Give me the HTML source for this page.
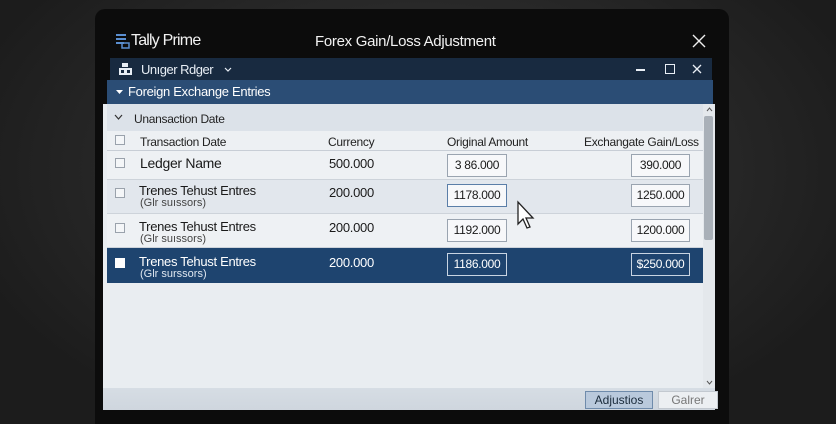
<!DOCTYPE html>
<html><head><meta charset="utf-8"><style>
*{margin:0;padding:0;box-sizing:border-box}
html,body{width:836px;height:424px;overflow:hidden}
body{background:radial-gradient(ellipse at 50% 40%,#3a3a3a,#1c1c1c 80%);font-family:"Liberation Sans",sans-serif;position:relative}
span{white-space:nowrap}
.bezel{position:absolute;left:95px;top:9px;width:634px;height:415px;background:#0c0c0c;border-radius:10px 10px 0 0}
.abs{position:absolute}
.title{left:110px;top:28px;width:602px;height:30px;color:#f2f2f2}
.sub{left:110px;top:58px;width:602px;height:22px;background:#182a40;color:#e8eef5;font-size:13px}
.hdr{left:107px;top:80px;width:606px;height:24px;background:#2b4d75;color:#fff;font-size:13px}
.content{left:103px;top:104px;width:612px;height:306px;background:#e9edf1}
.grp{left:107px;top:104px;width:596px;height:27px;background:#dce2e9;font-size:12px;color:#222}
.colh{left:107px;top:131px;width:596px;height:20px;background:#edf0f3;font-size:12px;color:#222;border-bottom:1px solid #c8ced6;letter-spacing:-0.3px}
.row{position:absolute;left:107px;width:596px;border-bottom:1px solid #cdd3da;color:#1a1a1a}
.cb{position:absolute;left:8px;width:10px;height:10px;border:1px solid #9aa2ac;background:#f4f6f8}
.t{position:absolute;font-size:13px;letter-spacing:-0.3px}
.s{position:absolute;font-size:11px;color:#444}
.box{position:absolute;height:23px;border:1px solid #9aa4b0;background:#f7f8fa;font-size:12px;text-align:center;line-height:21px;letter-spacing:-0.3px}
.sel{background:#1e446f;color:#fff}
.sel .box{background:#1e446f;border-color:#c8d4e2;color:#fff}
.sel .s{color:#dfe7f0}
.btn{position:absolute;top:391px;height:18px;font-size:12px;text-align:center;line-height:16px}
</style></head><body>
<div class="bezel"></div>
<div class="abs title">
 <svg class="abs" style="left:6px;top:5px" width="14" height="16"><rect x="0" y="1" width="10" height="2" fill="#5b8fd0"/><rect x="0" y="5" width="10" height="2" fill="#5b8fd0"/><rect x="0" y="9" width="8" height="2" fill="#5b8fd0"/><rect x="6" y="10" width="7" height="5" fill="none" stroke="#5b8fd0" stroke-width="1.5"/></svg>
 <span class="abs" style="left:21px;top:4px;font-size:16px;letter-spacing:-0.8px">Tally Prime</span>
 <span class="abs" style="left:205px;top:5px;font-size:15px;letter-spacing:-0.3px">Forex Gain/Loss Adjustment</span>
 <svg class="abs" style="left:582px;top:6px" width="14" height="14"><path d="M1 1L13 13M13 1L1 13" stroke="#eee" stroke-width="1.4"/></svg>
</div>
<div class="abs sub">
 <svg class="abs" style="left:9px;top:5px" width="13" height="12"><rect x="3" y="0" width="6" height="4" fill="#e8eef5"/><rect x="0" y="5" width="13" height="7" fill="#e8eef5"/><rect x="2" y="7" width="3" height="3" fill="#182a40"/><rect x="8" y="7" width="3" height="3" fill="#182a40"/></svg>
 <span class="abs" style="left:31px;top:4px;letter-spacing:-0.5px">Unıger Rdger</span>
 <svg class="abs" style="left:114px;top:9px" width="8" height="5"><path d="M1 1L4 4L7 1" stroke="#e8eef5" fill="none" stroke-width="1.2"/></svg>
 <div class="abs" style="left:526px;top:11px;width:9px;height:1.5px;background:#e8eef5"></div>
 <span class="abs" style="left:555px;top:6px;width:10px;height:10px;border:1.5px solid #e8eef5"></span>
 <svg class="abs" style="left:582px;top:6px" width="10" height="10"><path d="M1 1L9 9M9 1L1 9" stroke="#e8eef5" stroke-width="1.3"/></svg>
</div>
<div class="abs hdr"><svg class="abs" style="left:9px;top:10px" width="7" height="5"><path d="M0 0H7L3.5 4Z" fill="#fff"/></svg><span class="abs" style="left:21px;top:4px;letter-spacing:-0.3px">Foreign Exchange Entries</span></div>
<div class="abs content"></div>
<div class="abs grp"><svg class="abs" style="left:7px;top:10px" width="9" height="6"><path d="M1 1L4.5 5L8 1" stroke="#333" fill="none" stroke-width="1.2"/></svg><span class="abs" style="left:27px;top:8px;letter-spacing:-0.3px">Unansaction Date</span></div>
<div class="abs colh"><div class="cb" style="top:4px"></div>
 <span class="abs" style="left:33px;top:4px">Transaction Date</span>
 <span class="abs" style="left:221px;top:4px">Currency</span>
 <span class="abs" style="left:340px;top:4px">Original Amount</span>
 <span class="abs" style="left:477px;top:4px">Exchangate Gain/Loss</span>
</div>
<div class="row" style="top:151px;height:29px;background:#eef1f4"><div class="cb" style="top:7px"></div>
 <span class="t" style="left:33px;top:4px;font-size:14px">Ledger Name</span><span class="t" style="left:222px;top:5px">500.000</span>
 <div class="box" style="left:340px;top:3px;width:60px">3 86.000</div><div class="box" style="left:524px;top:3px;width:59px">390.000</div></div>
<div class="row" style="top:180px;height:34px;background:#e2e7ed"><div class="cb" style="top:8px"></div>
 <span class="t" style="left:32px;top:3px">Trenes Tehust Entres</span><span class="s" style="left:33px;top:17px">(Glr suıssors)</span><span class="t" style="left:222px;top:5px">200.000</span>
 <div class="box" style="left:340px;top:4px;width:60px;border-color:#5a7ea8">1178.000</div><div class="box" style="left:524px;top:4px;width:59px">1250.000</div></div>
<div class="row" style="top:214px;height:34px;background:#eef1f4"><div class="cb" style="top:9px"></div>
 <span class="t" style="left:32px;top:5px">Trenes Tehust Entres</span><span class="s" style="left:33px;top:19px">(Glr suıssors)</span><span class="t" style="left:222px;top:6px">200.000</span>
 <div class="box" style="left:340px;top:5px;width:60px">1192.000</div><div class="box" style="left:524px;top:5px;width:59px">1200.000</div></div>
<div class="row sel" style="top:248px;height:35px;border:none"><div class="cb" style="top:10px;background:#fff;border-color:#fff"></div>
 <span class="t" style="left:32px;top:6px">Trenes Tehust Entres</span><span class="s" style="left:33px;top:20px">(Glr surssors)</span><span class="t" style="left:222px;top:7px">200.000</span>
 <div class="box" style="left:340px;top:5px;width:60px">1186.000</div><div class="box" style="left:524px;top:5px;width:59px">$250.000</div></div>
<svg class="abs" style="left:516px;top:200px" width="22" height="32"><path d="M2 2 L2 24 L7 19 L11 28 L14 27 L10 18 L17 18 Z" fill="#fff" stroke="#222" stroke-width="1.3"/></svg>
<div class="abs" style="left:703px;top:104px;width:12px;height:284px;background:#e4e8ec"></div>
<div class="abs" style="left:704px;top:116px;width:9px;height:124px;background:#a9b0b8;border-radius:2px"></div>
<svg class="abs" style="left:706px;top:107px" width="7" height="5"><path d="M1 4L3.5 1L6 4" stroke="#555" fill="none"/></svg>
<svg class="abs" style="left:706px;top:380px" width="7" height="5"><path d="M1 1L3.5 4L6 1" stroke="#555" fill="none"/></svg>
<div class="abs" style="left:103px;top:388px;width:612px;height:22px;background:linear-gradient(#d6dde4,#cfd6de)"></div>
<div class="btn" style="left:585px;width:68px;background:#b9c9dc;border:1px solid #6f8bab;color:#1a2a3a">Adjustios</div>
<div class="btn" style="left:658px;width:60px;background:#eceff2;border:1px solid #c3c9d0;color:#777">Galrer</div>
</body></html>
